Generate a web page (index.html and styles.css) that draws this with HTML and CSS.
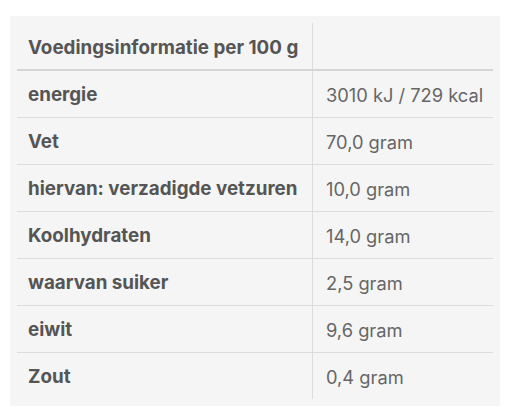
FILE: index.html
```html
<!DOCTYPE html>
<html lang="nl">
<head>
<meta charset="utf-8">
<link rel="stylesheet" href="styles.css">
</head>
<body>
<div class="panel">
  <div class="nutri">
    <div class="row head"><div class="label">Voedingsinformatie per 100 g</div><div class="value"></div></div>
    <div class="row"><div class="label">energie</div><div class="value">3010 kJ / 729 kcal</div></div>
    <div class="row"><div class="label">Vet</div><div class="value">70,0 gram</div></div>
    <div class="row"><div class="label">hiervan: verzadigde vetzuren</div><div class="value">10,0 gram</div></div>
    <div class="row"><div class="label">Koolhydraten</div><div class="value">14,0 gram</div></div>
    <div class="row"><div class="label">waarvan suiker</div><div class="value">2,5 gram</div></div>
    <div class="row"><div class="label">eiwit</div><div class="value">9,6 gram</div></div>
    <div class="row last"><div class="label">Zout</div><div class="value">0,4 gram</div></div>
  </div>
</div>
</body>
</html>
```

FILE: styles.css
```css
html, body {
  margin: 0;
  padding: 0;
  background: #ffffff;
}
body {
  font-family: Inter, "Noto Sans", "Liberation Sans", sans-serif;
  color: #555555;
}
.panel {
  margin: 16px 10px 0 10px;
  width: 490px;
  box-sizing: border-box;
  padding: 7px;
  background: #f5f5f5;
}
.nutri {
  display: flex;
  flex-direction: column;
  width: 476px;
}
.row {
  display: grid;
  grid-template-columns: 295px 181px;
  height: 47px;
  box-sizing: border-box;
  border-bottom: 1px solid #dddddd;
}
.row.head {
  height: 48px;
  border-bottom: 2px solid #d6d6d6;
}
.row.head .label {
  padding-top: 4px;
}
.row.last {
  height: 46px;
  border-bottom: none;
}
.label, .value {
  display: flex;
  align-items: center;
  box-sizing: border-box;
  white-space: nowrap;
  line-height: 22px;
  padding-top: 2px;
}
.label {
  padding-left: 11px;
  font-size: 18.8px;
  font-weight: 700;
  color: #555555;
}
.value {
  padding-left: 13px;
  font-size: 18.3px;
  font-weight: 400;
  color: #666666;
  border-left: 1px solid #dddddd;
}
```
